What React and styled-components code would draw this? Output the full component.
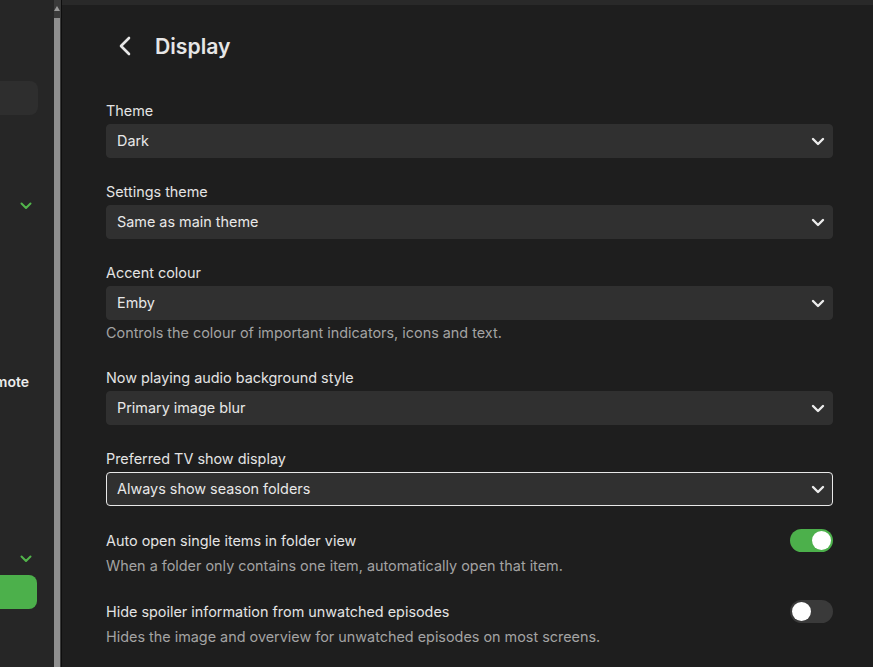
import React, { useState } from "react";
import styled, { createGlobalStyle } from "styled-components";

const Global = createGlobalStyle`
  html, body { margin: 0; padding: 0; background: #1e1e1e; }
  body { font-family: Inter, "Noto Sans", sans-serif; -webkit-font-smoothing: antialiased; }
  * { box-sizing: border-box; }
`;

const Page = styled.div`
  display: flex;
  width: 873px;
  height: 667px;
  overflow: hidden;
`;

const Sidebar = styled.aside`
  width: 54px;
  flex: none;
  background: #262626;
  overflow: hidden;
  padding-top: 81px;
`;

const SideColumn = styled.div`
  width: 208px;
  margin-left: -170px;
  display: flex;
  flex-direction: column;
`;

const SideBox = styled.div`
  height: 34px;
  border-radius: 8px;
  background: ${(p) => (p.$green ? "#4cb04b" : "#2e2e2e")};
  margin-top: ${(p) => p.$mt || 0}px;
  margin-right: ${(p) => p.$mr || 0}px;
`;

const SideChevronRow = styled.div`
  display: flex;
  justify-content: flex-end;
  padding-right: 6px;
  height: 12px;
  margin-top: ${(p) => p.$mt}px;
  color: #52b54b;
`;

const SideText = styled.div`
  text-align: right;
  padding-right: 9px;
  margin-top: ${(p) => p.$mt}px;
  font-size: 14px;
  line-height: 20px;
  font-weight: 600;
  color: #ececec;
`;

const Scroll = styled.div`
  width: 8px;
  flex: none;
  background: #3a3a3a;
  border-right: 1px solid #0e0e0e;
  display: flex;
  flex-direction: column;
  align-items: flex-start;
  padding-top: 6px;
`;

const ScrollArrow = styled.div`
  width: 0;
  height: 0;
  border-left: 3px solid transparent;
  border-right: 3px solid transparent;
  border-bottom: 5px solid #9a9a9a;
`;

const ScrollThumb = styled.div`
  width: 6px;
  flex: 1;
  margin-top: 7px;
  background: #8f8f8f;
`;

const Main = styled.main`
  flex: 1;
  background: #1e1e1e;
  border-top: 5px solid #292929;
  padding: 21px 40px 0 44px;
`;

const Header = styled.div`
  display: flex;
  align-items: center;
  height: 40px;
  gap: 22px;
  padding-left: 11px;
`;

const BackButton = styled.button`
  background: none;
  border: none;
  padding: 0;
  width: 16px;
  height: 24px;
  display: flex;
  align-items: center;
  justify-content: center;
  color: #e6e6e6;
`;

const Title = styled.h1`
  margin: 0;
  font-size: 21.2px;
  font-weight: 600;
  color: #e6e6e6;
  line-height: 26px;
`;

const Form = styled.div`
  margin-top: 35px;
  display: flex;
  flex-direction: column;
`;

const Field = styled.div`
  display: flex;
  flex-direction: column;
  margin-bottom: ${(p) => (p.$hasDesc ? 25 : 24)}px;
`;

const Label = styled.label`
  font-size: 14.4px;
  line-height: 20px;
  color: #e3e3e3;
  margin-bottom: 3px;
`;

const Select = styled.div`
  height: 34px;
  border-radius: 4px;
  background: #303030;
  border: 1px solid ${(p) => (p.$focused ? "#e8e8e8" : "#303030")};
  display: flex;
  align-items: center;
  justify-content: space-between;
  padding: 0 5px 1px 10px;
  font-size: 14.4px;
  color: #e8e8e8;
`;

const Description = styled.div`
  font-size: 14.4px;
  line-height: 20px;
  color: #a3a3a3;
  margin-top: ${(p) => p.$mt || 3}px;
`;

const ToggleField = styled.div`
  display: flex;
  flex-direction: column;
  margin-top: 1px;
  margin-bottom: 25px;
`;

const ToggleRow = styled.div`
  display: flex;
  align-items: center;
  justify-content: space-between;
  height: 20px;
`;

const ToggleLabel = styled.div`
  font-size: 14.4px;
  line-height: 20px;
  color: #e3e3e3;
`;

const Switch = styled.button`
  width: 43px;
  height: 23px;
  border-radius: 12px;
  border: none;
  padding: 2px;
  background: ${(p) => (p.$on ? "#4cb04b" : "#3a3a3a")};
  display: flex;
  justify-content: ${(p) => (p.$on ? "flex-end" : "flex-start")};
  align-items: center;
  margin-top: -2px;
`;

const Knob = styled.span`
  width: 19px;
  height: 19px;
  border-radius: 50%;
  background: #ffffff;
`;

const Chevron = ({ size = 16 }) => (
  <svg width={size} height={size} viewBox="0 0 16 16" fill="none">
    <path d="M3 6 L8 11 L13 6" stroke="currentColor" strokeWidth="2.4" strokeLinecap="round" strokeLinejoin="round" />
  </svg>
);

const SelectChevron = styled.span`
  display: flex;
  color: #ececec;
  width: 18px;
  justify-content: center;
`;

const SmallChevron = () => (
  <svg width="12" height="12" viewBox="0 0 12 12" fill="none">
    <path d="M1.5 3.5 L6 8 L10.5 3.5" stroke="currentColor" strokeWidth="2" strokeLinecap="round" strokeLinejoin="round" />
  </svg>
);

const fields = [
  { label: "Theme", value: "Dark" },
  { label: "Settings theme", value: "Same as main theme" },
  { label: "Accent colour", value: "Emby", desc: "Controls the colour of important indicators, icons and text." },
  { label: "Now playing audio background style", value: "Primary image blur" },
  { label: "Preferred TV show display", value: "Always show season folders", focused: true },
];

const toggles = [
  { label: "Auto open single items in folder view", desc: "When a folder only contains one item, automatically open that item.", on: true },
  { label: "Hide spoiler information from unwatched episodes", desc: "Hides the image and overview for unwatched episodes on most screens.", on: false },
];

export default function App() {
  const [state, setState] = useState(toggles.map((t) => t.on));
  return (
    <Page>
      <Global />
      <Sidebar>
        <SideColumn>
          <SideBox />
          <SideChevronRow $mt={85}><SmallChevron /></SideChevronRow>
          <SideText $mt={160}>Remote</SideText>
          <SideChevronRow $mt={161}><SmallChevron /></SideChevronRow>
          <SideBox $green $mt={10} $mr={1} />
        </SideColumn>
      </Sidebar>
      <Scroll>
        <ScrollArrow />
        <ScrollThumb />
      </Scroll>
      <Main>
        <Header>
          <BackButton aria-label="Back">
            <svg width="14" height="22" viewBox="0 0 14 22" fill="none">
              <path d="M11 3 L3 11 L11 19" stroke="currentColor" strokeWidth="2.6" strokeLinecap="round" strokeLinejoin="round" />
            </svg>
          </BackButton>
          <Title>Display</Title>
        </Header>
        <Form>
          {fields.map((f) => (
            <Field key={f.label} $hasDesc={!!f.desc}>
              <Label>{f.label}</Label>
              <Select $focused={f.focused}>
                <span>{f.value}</span>
                <SelectChevron><Chevron /></SelectChevron>
              </Select>
              {f.desc && <Description>{f.desc}</Description>}
            </Field>
          ))}
          {toggles.map((t, i) => (
            <ToggleField key={t.label}>
              <ToggleRow>
                <ToggleLabel>{t.label}</ToggleLabel>
                <Switch
                  $on={state[i]}
                  onClick={() => setState((s) => s.map((v, j) => (j === i ? !v : v)))}
                >
                  <Knob />
                </Switch>
              </ToggleRow>
              <Description $mt={5}>{t.desc}</Description>
            </ToggleField>
          ))}
        </Form>
      </Main>
    </Page>
  );
}
